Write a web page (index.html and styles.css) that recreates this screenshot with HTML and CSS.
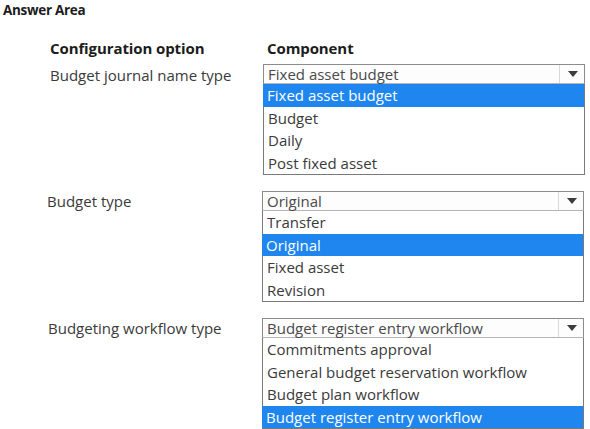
FILE: index.html
```html
<!DOCTYPE html>
<html>
<head>
<meta charset="utf-8">
<link rel="stylesheet" href="styles.css">
</head>
<body>
<div class="title">Answer Area</div>
<div class="table">
  <div class="row head">
    <div class="label">Configuration option</div>
    <div class="comp">Component</div>
  </div>
  <div class="row r1">
    <div class="label">Budget journal name type</div>
    <div class="dd">
      <div class="closed"><span class="val">Fixed asset budget</span><span class="arrow"></span></div>
      <div class="list">
        <div class="opt sel">Fixed asset budget</div>
        <div class="opt">Budget</div>
        <div class="opt">Daily</div>
        <div class="opt">Post fixed asset</div>
      </div>
    </div>
  </div>
  <div class="row r2">
    <div class="label">Budget type</div>
    <div class="dd">
      <div class="closed"><span class="val">Original</span><span class="arrow"></span></div>
      <div class="list">
        <div class="opt">Transfer</div>
        <div class="opt sel">Original</div>
        <div class="opt">Fixed asset</div>
        <div class="opt">Revision</div>
      </div>
    </div>
  </div>
  <div class="row r3">
    <div class="label">Budgeting workflow type</div>
    <div class="dd">
      <div class="closed"><span class="val">Budget register entry workflow</span><span class="arrow"></span></div>
      <div class="list">
        <div class="opt">Commitments approval</div>
        <div class="opt">General budget reservation workflow</div>
        <div class="opt">Budget plan workflow</div>
        <div class="opt sel">Budget register entry workflow</div>
      </div>
    </div>
  </div>
</div>
</body>
</html>
```
FILE: styles.css
```css
html, body {
  margin: 0;
  padding: 0;
  background: #ffffff;
}
body {
  font-family: "Open Sans", "Noto Sans", sans-serif;
  font-size: 15px;
  color: #3a3a3a;
  width: 590px;
  height: 429px;
  overflow: hidden;
}
.title {
  font-size: 13.5px;
  font-weight: 700;
  color: #1c1c1c;
  line-height: 20px;
  padding-left: 3px;
  letter-spacing: -0.3px;
}
.table {
  display: flex;
  flex-direction: column;
}
.row {
  display: flex;
  align-items: flex-start;
}
.label {
  width: 213px;
  padding-left: 50px;
  line-height: 20px;
}
.head {
  margin-top: 18px;
  margin-bottom: 6px;
  font-weight: 700;
  color: #1c1c1c;
}
.head .label, .head .comp {
  line-height: 20px;
  letter-spacing: -0.1px;
}
.head .comp {
  padding-left: 4px;
}
.r1 .label { padding-top: 1px; }
.r2 { margin-top: 16px; }
.r2 .label { padding-top: 0; padding-left: 47px; width: 215px; }
.r3 { margin-top: 16px; }
.r3 .label { padding-top: 0; padding-left: 48px; width: 214px; }
.dd {
  width: 322px;
  display: flex;
  flex-direction: column;
}
.closed {
  height: 18px;
  border: 1px solid #8c8c8c;
  border-bottom-color: #b5b5b5;
  display: flex;
  align-items: center;
  background: #fdfdfd;
  color: #4a4a4a;
}
.val {
  flex: 1;
  padding-left: 4px;
  line-height: 18px;
}
.arrow {
  width: 24px;
  height: 18px;
  border-left: 1px solid #d9d9d9;
  position: relative;
}
.arrow::after {
  content: "";
  position: absolute;
  left: 8px;
  top: 6px;
  border-left: 5px solid transparent;
  border-right: 5px solid transparent;
  border-top: 6px solid #3c3c3c;
}
.list {
  border: 1px solid #7a7a7a;
  border-top: none;
}
.opt {
  height: 22.5px;
  line-height: 22.5px;
  padding-left: 4px;
  color: #3a3a3a;
}
.opt.sel {
  background: #1e86ee;
  color: #ffffff;
  margin-left: -1px;
  padding-left: 4px;
}
```
